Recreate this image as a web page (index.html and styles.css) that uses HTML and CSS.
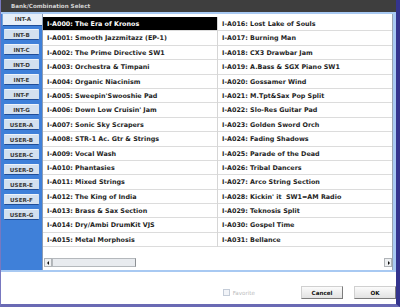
FILE: index.html
```html
<!DOCTYPE html>
<html lang="en">
	<head>
		<meta charset="utf-8">
		<title>Bank/Combination Select</title>
		<link rel="stylesheet" href="styles.css">
	</head>
	<body>
		<div class="window">
			<div class="titlebar">Bank/Combination Select</div>

			<div class="main">
				<div class="tabs">
					<div class="tab selected">INT-A</div>
					<div class="tab">INT-B</div>
					<div class="tab">INT-C</div>
					<div class="tab">INT-D</div>
					<div class="tab">INT-E</div>
					<div class="tab">INT-F</div>
					<div class="tab">INT-G</div>
					<div class="tab">USER-A</div>
					<div class="tab">USER-B</div>
					<div class="tab">USER-C</div>
					<div class="tab">USER-D</div>
					<div class="tab">USER-E</div>
					<div class="tab">USER-F</div>
					<div class="tab">USER-G</div>
				</div>

				<div class="listPane">
					<div class="columns">
						<div class="column">
							<div class="row selected">I-A000: The Era of Kronos</div>
							<div class="row">I-A001: Smooth Jazzmitazz (EP-1)</div>
							<div class="row">I-A002: The Prime Directive SW1</div>
							<div class="row">I-A003: Orchestra &amp; Timpani</div>
							<div class="row">I-A004: Organic Niacinism</div>
							<div class="row">I-A005: Sweepin'Swooshie Pad</div>
							<div class="row">I-A006: Down Low Cruisin' Jam</div>
							<div class="row">I-A007: Sonic Sky Scrapers</div>
							<div class="row">I-A008: STR-1 Ac. Gtr &amp; Strings</div>
							<div class="row">I-A009: Vocal Wash</div>
							<div class="row">I-A010: Phantasies</div>
							<div class="row">I-A011: Mixed Strings</div>
							<div class="row">I-A012: The King of India</div>
							<div class="row">I-A013: Brass &amp; Sax Section</div>
							<div class="row">I-A014: Dry/Ambi DrumKit VJS</div>
							<div class="row">I-A015: Metal Morphosis</div>
						</div>
						<div class="column">
							<div class="row">I-A016: Lost Lake of Souls</div>
							<div class="row">I-A017: Burning Man</div>
							<div class="row">I-A018: CX3 Drawbar Jam</div>
							<div class="row">I-A019: A.Bass &amp; SGX Piano SW1</div>
							<div class="row">I-A020: Gossamer Wind</div>
							<div class="row">I-A021: M.Tpt&amp;Sax Pop Split</div>
							<div class="row">I-A022: Slo-Res Guitar Pad</div>
							<div class="row">I-A023: Golden Sword Orch</div>
							<div class="row">I-A024: Fading Shadows</div>
							<div class="row">I-A025: Parade of the Dead</div>
							<div class="row">I-A026: Tribal Dancers</div>
							<div class="row">I-A027: Arco String Section</div>
							<div class="row">I-A028: Kickin' it &nbsp;SW1=AM Radio</div>
							<div class="row">I-A029: Teknosis Split</div>
							<div class="row">I-A030: Gospel Time</div>
							<div class="row">I-A031: Bellance</div>
						</div>
					</div>

					<div class="scrollbar">
						<div class="arrow left"></div>
						<div class="thumb"></div>
						<div class="track"></div>
						<div class="arrow right"></div>
					</div>
				</div>
			</div>

			<div class="footer">
				<label class="favorite"><span class="checkbox"></span>Favorite</label>
				<div class="button">Cancel</div>
				<div class="button">OK</div>
			</div>
		</div>
	</body>
</html>
```

FILE: styles.css
```css
body {
	margin: 0;
	font-family: "DejaVu Sans", Verdana, sans-serif;
	font-weight: bold;
	background: #fff;
}

.window {
	width: 400px;
	height: 307px;
	box-sizing: border-box;
	border-left: 1px solid #7878c0;
	border-right: 4px solid #34348e;
	border-bottom: 3px solid #6a6ab4;
	display: flex;
	flex-direction: column;
}

.titlebar {
	height: 12px;
	line-height: 12px;
	background: #3e3e3e;
	color: #d4d4d4;
	font-size: 5.6px;
	padding-left: 10px;
}

/* blue tab column + list */
.main {
	display: flex;
	height: 256px;
	background: #a8c9f2;
	padding: 2px 3px 1px 0;
}

.tabs {
	width: 41px;
	background: #3f80d9;
}

.tab {
	height: 11px;
	line-height: 11px;
	margin: 0 3px 4px 3px;
	background: #d3e0ef;
	border-top: 1px solid #eef4fb;
	border-bottom: 1px solid #1f4d98;
	box-sizing: border-box;
	border-radius: 1px;
	color: #3a3a3a;
	font-size: 5.6px;
	text-align: center;
}

.tab.selected {
	margin: 0 -1px 4px 1px;
	height: 12px;
	margin-bottom: 3px;
	background: #e6eef8;
	border-top: none;
	border-left: 1px solid #7aa4d8;
}

.listPane {
	flex: 1;
	background: #fff;
	border-left: 1px solid #8c9cb4;
	border-right: 1px solid #9aa4b0;
	display: flex;
	flex-direction: column;
}

.columns {
	display: flex;
	padding-top: 3px;
}

.column {
	flex: 1;
}

.column + .column {
	border-left: 1px solid #d6d6d6;
}

.row {
	height: 14.4px;
	line-height: 14px;
	box-sizing: border-box;
	border-bottom: 1px solid #dcdcdc;
	padding-left: 4px;
	font-size: 6.4px;
	color: #1e1e1e;
	white-space: nowrap;
}

.row.selected {
	background: #000;
	color: #fff;
}

.scrollbar {
	display: flex;
	height: 9px;
	margin: 11px 0 0 1px;
}

.arrow {
	width: 8px;
	background: #eef0f2;
	border: 1px solid #b0b4b8;
	box-sizing: border-box;
	position: relative;
}

.arrow::after {
	content: "";
	position: absolute;
	top: 2px;
	left: 2px;
	border-top: 2px solid transparent;
	border-bottom: 2px solid transparent;
}

.arrow.left::after {
	border-right: 2px solid #111;
}

.arrow.right::after {
	border-left: 2px solid #111;
	left: 3px;
}

.thumb {
	width: 84px;
	background: #e8ebef;
	border: 1px solid #b4b8bc;
	border-right-color: #8c9094;
	box-sizing: border-box;
}

.track {
	flex: 1;
}

.footer {
	flex: 1;
	display: flex;
	align-items: flex-end;
	justify-content: flex-end;
	padding: 0 0 5px 0;
	border-top: 1px solid #a8c9f2;
}

.favorite {
	display: flex;
	align-items: center;
	color: #bcbcbc;
	font-size: 5.6px;
	font-weight: normal;
	margin-right: 35px;
	height: 13px;
}

.checkbox {
	width: 7px;
	height: 7px;
	box-sizing: border-box;
	border: 1px solid #c4ccd8;
	background: #f2f4f8;
	margin-right: 3px;
}

.button {
	width: 42px;
	height: 13px;
	line-height: 12px;
	box-sizing: border-box;
	background: linear-gradient(#fbfbfb, #e2e2e2);
	border: 1px solid #d0d0d0;
	border-right-color: #7c7c7c;
	border-bottom-color: #7c7c7c;
	text-align: center;
	font-size: 5.6px;
	color: #111;
	margin-left: 11px;
}
```
